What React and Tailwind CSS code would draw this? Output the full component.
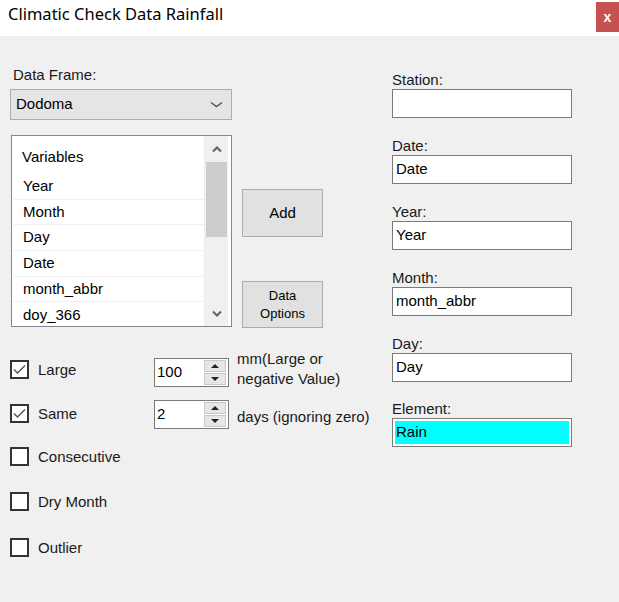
import React from "react";

const font = { fontFamily: "'Liberation Sans', Arial, sans-serif" };

function Chevron({ dir = "down", className = "", w = 10, sw = 2 }) {
  const d = dir === "down" ? `M1 1.5 L${w / 2} 5.5 L${w - 1} 1.5` : `M1 5.5 L${w / 2} 1.5 L${w - 1} 5.5`;
  return (
    <svg width={w} height="7" viewBox={`0 0 ${w} 7`} className={className}>
      <path d={d} fill="none" stroke="currentColor" strokeWidth={sw} />
    </svg>
  );
}

function Tri({ dir }) {
  const pts = dir === "up" ? "0,4 4,0 8,4" : "0,0 4,4 8,0";
  return (
    <svg width="8" height="4" viewBox="0 0 8 4">
      <polygon points={pts} fill="#222" />
    </svg>
  );
}

function CheckBox({ checked, label }) {
  return (
    <div className="h-[19px] flex items-center">
      <div className="w-[19px] h-[19px] border-2 border-[#333] bg-white flex items-center justify-center">
        {checked && (
          <svg width="13" height="11" viewBox="0 0 13 11">
            <path d="M1 5.5 L4.5 9 L12 1.5" fill="none" stroke="#555" strokeWidth="1.5" />
          </svg>
        )}
      </div>
      <span className="ml-[9px] text-[15px] leading-[18px] text-[#1a1a1a]">{label}</span>
    </div>
  );
}

function Spinner({ value }) {
  return (
    <div className="w-[75px] h-[29px] border border-[#7a7a7a] bg-white flex">
      <div className="flex-1 flex items-center pl-[2px] text-[15px]">{value}</div>
      <div className="w-[22px] flex flex-col m-[1px] mr-[2px] gap-[1px]">
        <div className="flex-1 bg-[#e6e6e6] border border-[#c8c8c8] flex items-center justify-center">
          <Tri dir="up" />
        </div>
        <div className="flex-1 bg-[#e6e6e6] border border-[#c8c8c8] flex items-center justify-center">
          <Tri dir="down" />
        </div>
      </div>
    </div>
  );
}

function Field({ label, value, cyan, top }) {
  return (
    <div className={top}>
      <div className="text-[15px] leading-[18px] text-[#1a1a1a]">{label}</div>
      <div className="w-[180px] h-[29px] border border-[#7a7a7a] bg-white p-[2px]">
        <div className={`h-full flex items-center pl-[1px] text-[15px] ${cyan ? "bg-[#00ffff]" : ""}`}>
          {value}
        </div>
      </div>
    </div>
  );
}

const variables = ["Year", "Month", "Day", "Date", "month_abbr", "doy_366"];

export default function App() {
  return (
    <div className="w-[619px] h-[602px] bg-[#f0f0f0] text-black overflow-hidden" style={font}>
      {/* title bar */}
      <div className="h-[36px] bg-white flex justify-between">
        <div className="pl-[8px] pt-[4px] text-[16.5px] leading-[20px]" style={{ fontFamily: "'Noto Sans', sans-serif" }}>
          Climatic Check Data Rainfall
        </div>
        <div className="mt-[2px] w-[23px] h-[30px] bg-[#c75050] flex items-center justify-center text-white text-[14px] font-bold">
          x
        </div>
      </div>

      <div className="flex">
        {/* left column */}
        <div className="w-[381px] pl-[10px]">
          <div className="mt-[30px] ml-[3px] text-[15px] leading-[18px] text-[#1a1a1a]">Data Frame:</div>
          <div className="mt-[5px] w-[222px] h-[31px] bg-[#e5e5e5] border border-[#adadad] flex items-center justify-between pl-[5px] pr-[8px]">
            <span className="text-[15px]">Dodoma</span>
            <Chevron dir="down" w={13} sw={1.5} className="text-[#555]" />
          </div>

          <div className="flex mt-[15px]">
            {/* listbox */}
            <div className="ml-[1px] w-[221px] h-[192px] border border-[#828790] bg-white flex overflow-hidden">
              <div className="flex-1 border-r border-[#ececec]">
                <div className="h-[38px] pt-[12px] pl-[10px] text-[15px] leading-[18px]">Variables</div>
                {variables.map((v) => (
                  <div
                    key={v}
                    className="h-[25.7px] flex items-center pl-[10px] text-[15px] border-b border-[#f0f0f0] ml-[1px]"
                  >
                    {v}
                  </div>
                ))}
              </div>
              <div className="w-[23px] mr-[3px] bg-[#f0f0f0] flex flex-col items-stretch">
                <div className="h-[26px] flex items-center justify-center text-[#606060]">
                  <Chevron dir="up" />
                </div>
                <div className="mx-[1px] h-[75px] bg-[#cdcdcd]" />
                <div className="flex-1" />
                <div className="h-[26px] flex items-center justify-center text-[#606060]">
                  <Chevron dir="down" />
                </div>
              </div>
            </div>

            {/* buttons */}
            <div className="ml-[10px] flex flex-col">
              <div className="mt-[54px] w-[81px] h-[48px] bg-[#e1e1e1] border border-[#adadad] flex items-center justify-center text-[15px]">
                Add
              </div>
              <div className="mt-[44px] w-[81px] h-[47px] bg-[#e1e1e1] border border-[#adadad] flex flex-col items-center justify-center text-[13px] leading-[18px]">
                <span>Data</span>
                <span>Options</span>
              </div>
            </div>
          </div>

          {/* options */}
          <div className="mt-[30px] h-[29px] flex items-start">
            <div className="w-[144px] mt-[2px]">
              <CheckBox checked label="Large" />
            </div>
            <Spinner value="100" />
            <div className="ml-[8px] -mt-[9px] text-[15px] leading-[20px] text-[#1a1a1a]">
              <div>mm(Large or</div>
              <div>negative Value)</div>
            </div>
          </div>
          <div className="mt-[13px] h-[29px] flex items-start">
            <div className="w-[144px] mt-[4px]">
              <CheckBox checked label="Same" />
            </div>
            <Spinner value="2" />
            <div className="ml-[8px] mt-[8px] text-[15px] leading-[18px] text-[#1a1a1a]">days (ignoring zero)</div>
          </div>
          <div className="mt-[18px]">
            <CheckBox label="Consecutive" />
          </div>
          <div className="mt-[26px]">
            <CheckBox label="Dry Month" />
          </div>
          <div className="mt-[27px]">
            <CheckBox label="Outlier" />
          </div>
        </div>

        {/* right column */}
        <div className="pl-[11px]">
          <Field top="mt-[35px]" label="Station:" value="" />
          <Field top="mt-[19px]" label="Date:" value="Date" />
          <Field top="mt-[19px]" label="Year:" value="Year" />
          <Field top="mt-[19px]" label="Month:" value="month_abbr" />
          <Field top="mt-[19px]" label="Day:" value="Day" />
          <Field top="mt-[18px]" label="Element:" value="Rain" cyan />
        </div>
      </div>
    </div>
  );
}
